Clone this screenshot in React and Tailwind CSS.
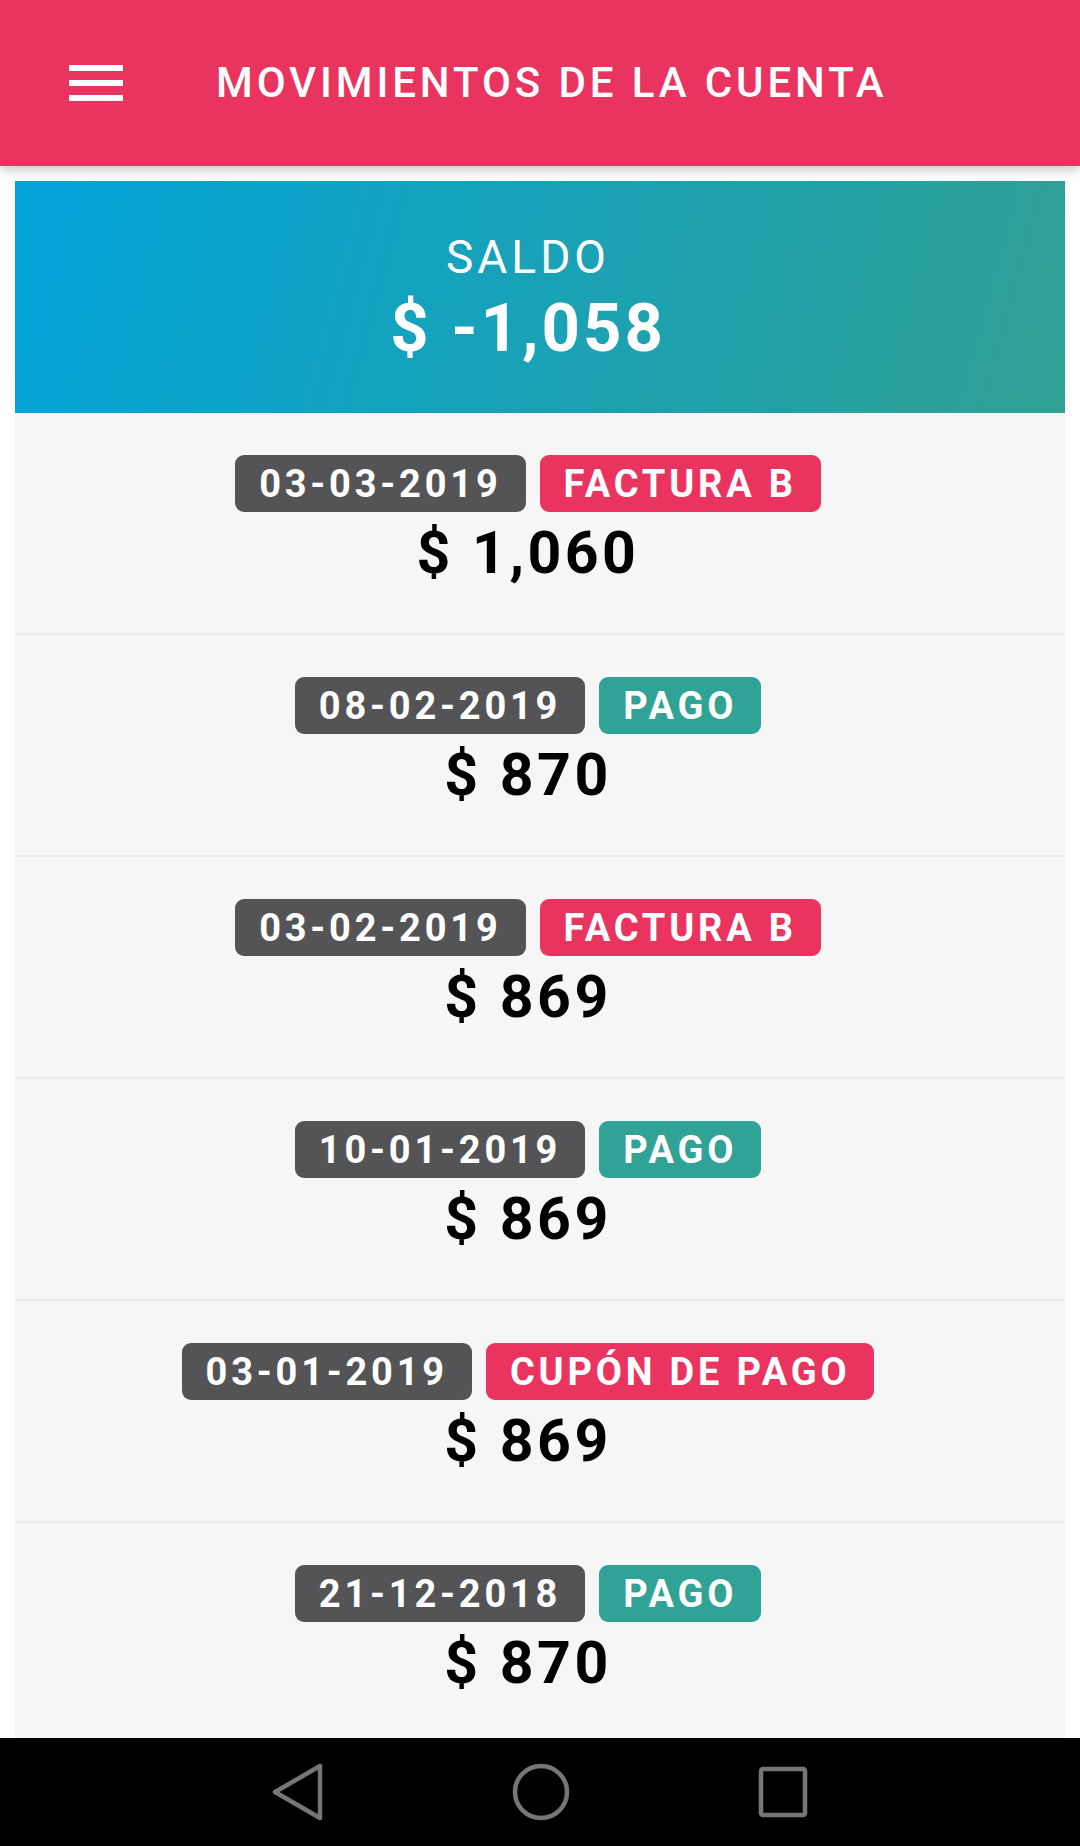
const movimientos = [
  { fecha: '03-03-2019', tipo: 'FACTURA B', monto: '$ 1,060' },
  { fecha: '08-02-2019', tipo: 'PAGO', monto: '$ 870' },
  { fecha: '03-02-2019', tipo: 'FACTURA B', monto: '$ 869' },
  { fecha: '10-01-2019', tipo: 'PAGO', monto: '$ 869' },
  { fecha: '03-01-2019', tipo: 'CUPÓN DE PAGO', monto: '$ 869' },
  { fecha: '21-12-2018', tipo: 'PAGO', monto: '$ 870' },
];

const Badge = ({ children, className }) => (
  <span
    className={`h-[57px] flex items-center pl-[24px] pr-[24px] rounded-[9px] text-white text-[38px] font-bold tracking-[3.8px] leading-none ${className}`}
  >
    {children}
  </span>
);

const Movimiento = ({ item }) => (
  <div className="h-[222px] shrink-0 border-b-2 border-[#ebebeb] flex flex-col items-center pt-[42px] pr-[24px]">
    <div className="flex gap-[14px]">
      <Badge className="bg-[#545456]">{item.fecha}</Badge>
      <Badge className={item.tipo === 'PAGO' ? 'bg-[#31a296]' : 'bg-[#ea3460]'}>{item.tipo}</Badge>
    </div>
    <div className="mt-[9px] text-[59px] leading-[64px] font-bold tracking-[3.5px] text-black">
      {item.monto}
    </div>
  </div>
);

export default function App() {
  return (
    <div className="w-[1080px] h-[1846px] bg-white flex flex-col overflow-hidden font-['Roboto',sans-serif]">
      {/* Toolbar */}
      <header className="relative z-10 h-[166px] shrink-0 bg-[#ea3460] flex items-center shadow-[0_4px_10px_rgba(0,0,0,0.22)]">
        <div className="ml-[69px] w-[54px] flex flex-col gap-[9px]">
          <span className="h-[6px] bg-white" />
          <span className="h-[6px] bg-white" />
          <span className="h-[6px] bg-white" />
        </div>
        <h1 className="ml-[93px] text-white text-[42px] font-medium tracking-[3.9px] leading-none">
          MOVIMIENTOS DE LA CUENTA
        </h1>
      </header>

      {/* Content */}
      <main className="flex-1 min-h-0 px-[15px] pt-[15px] overflow-hidden">
        <div className="h-[232px] pr-[24px] bg-[linear-gradient(105deg,#02a3da,#30a093)] flex flex-col items-center justify-center text-white">
          <div className="text-[46px] leading-[54px] font-normal tracking-[4px]">SALDO</div>
          <div className="mt-[8px] text-[67px] leading-[72px] font-bold tracking-[3px]">$ -1,058</div>
        </div>
        <div className="bg-[#f6f6f6] flex flex-col h-full">
          {movimientos.map((m, i) => (
            <Movimiento key={i} item={m} />
          ))}
        </div>
      </main>

      {/* Android nav bar */}
      <nav className="h-[108px] shrink-0 bg-black flex items-center justify-center gap-[188px]">
        <svg width="52" height="58" viewBox="0 0 52 58" fill="none" stroke="#767676" strokeWidth="4.5" strokeLinejoin="round">
          <path d="M48 3 L48 55 L3 29 Z" />
        </svg>
        <svg width="58" height="58" viewBox="0 0 58 58" fill="none" stroke="#767676" strokeWidth="4.5">
          <circle cx="29" cy="29" r="26" />
        </svg>
        <svg width="50" height="52" viewBox="0 0 50 52" fill="none" stroke="#767676" strokeWidth="4.5" strokeLinejoin="round">
          <rect x="3" y="3" width="44" height="46" rx="2" />
        </svg>
      </nav>
    </div>
  );
}
